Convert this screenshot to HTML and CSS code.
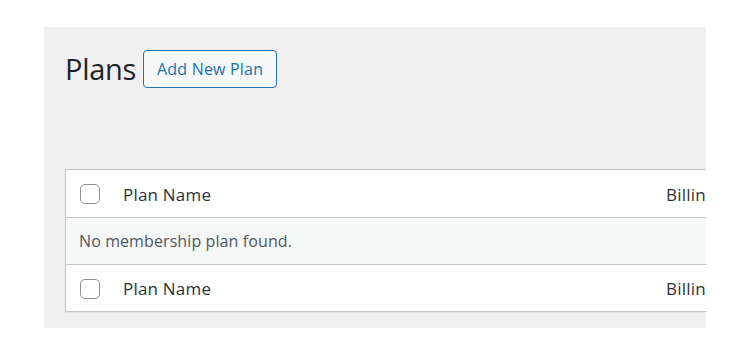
FILE: index.html
```html
<!DOCTYPE html>
<html lang="en">
<head>
<meta charset="utf-8">
<title>Plans</title>
<link rel="stylesheet" href="styles.css">
</head>
<body>
<div class="screen">
  <div class="header">
    <h1 class="title">Plans</h1>
    <a class="add-btn" href="#">Add New Plan</a>
  </div>
  <div class="list">
    <div class="row head">
      <span class="cb"><span class="box"></span></span>
      <span class="col-name">Plan Name</span>
      <span class="col-bill">Billing</span>
    </div>
    <div class="row empty">No membership plan found.</div>
    <div class="row foot">
      <span class="cb"><span class="box"></span></span>
      <span class="col-name">Plan Name</span>
      <span class="col-bill">Billing</span>
    </div>
  </div>
</div>
</body>
</html>
```

FILE: styles.css
```css
html, body {
  margin: 0;
  padding: 0;
  background: #ffffff;
}
body {
  font-family: "Open Sans", "Noto Sans", sans-serif;
}
.screen {
  margin: 27px 0 0 44px;
  width: 662px;
  height: 301px;
  padding-left: 21px;
  background: #f0f0f1;
  overflow: hidden;
  box-sizing: border-box;
}
.header {
  display: flex;
  align-items: center;
  gap: 7px;
  padding-top: 23px;
  height: 38px;
}
.title {
  margin: 0;
  font-size: 29px;
  font-weight: 400;
  color: #1d2327;
  letter-spacing: -0.3px;
  line-height: 38px;
}
.add-btn {
  display: flex;
  align-items: center;
  height: 36px;
  padding: 0 13px;
  border: 1px solid #2271b1;
  border-radius: 4px;
  background: #f6f7f7;
  color: #2271b1;
  font-size: 16px;
  letter-spacing: 0.2px;
  text-decoration: none;
}
.list {
  margin-top: 81px;
  width: 780px;
  border: 1px solid #c3c4c7;
  background: #ffffff;
  box-shadow: 0 1px 1px rgba(0, 0, 0, 0.04);
}
.row {
  display: flex;
  align-items: center;
  box-sizing: border-box;
}
.head {
  height: 48px;
  padding-top: 1px;
  border-bottom: 1px solid #c3c4c7;
}
.foot {
  height: 47px;
  padding-top: 1px;
  border-top: 1px solid #c3c4c7;
}
.cb {
  width: 57px;
  padding-left: 14px;
  box-sizing: border-box;
  display: flex;
  align-items: center;
}
.box {
  width: 20px;
  height: 20px;
  box-sizing: border-box;
  border: 1px solid #8c8f94;
  border-radius: 5px;
  background: #ffffff;
}
.col-name {
  width: 543px;
  font-size: 17px;
  letter-spacing: 0.2px;
  color: #2c3338;
}
.col-bill {
  font-size: 17px;
  letter-spacing: 0.2px;
  color: #2c3338;
}
.empty {
  height: 46px;
  padding-left: 13px;
  background: #f6f7f7;
  font-size: 16px;
  letter-spacing: 0.1px;
  color: #50575e;
}
```
